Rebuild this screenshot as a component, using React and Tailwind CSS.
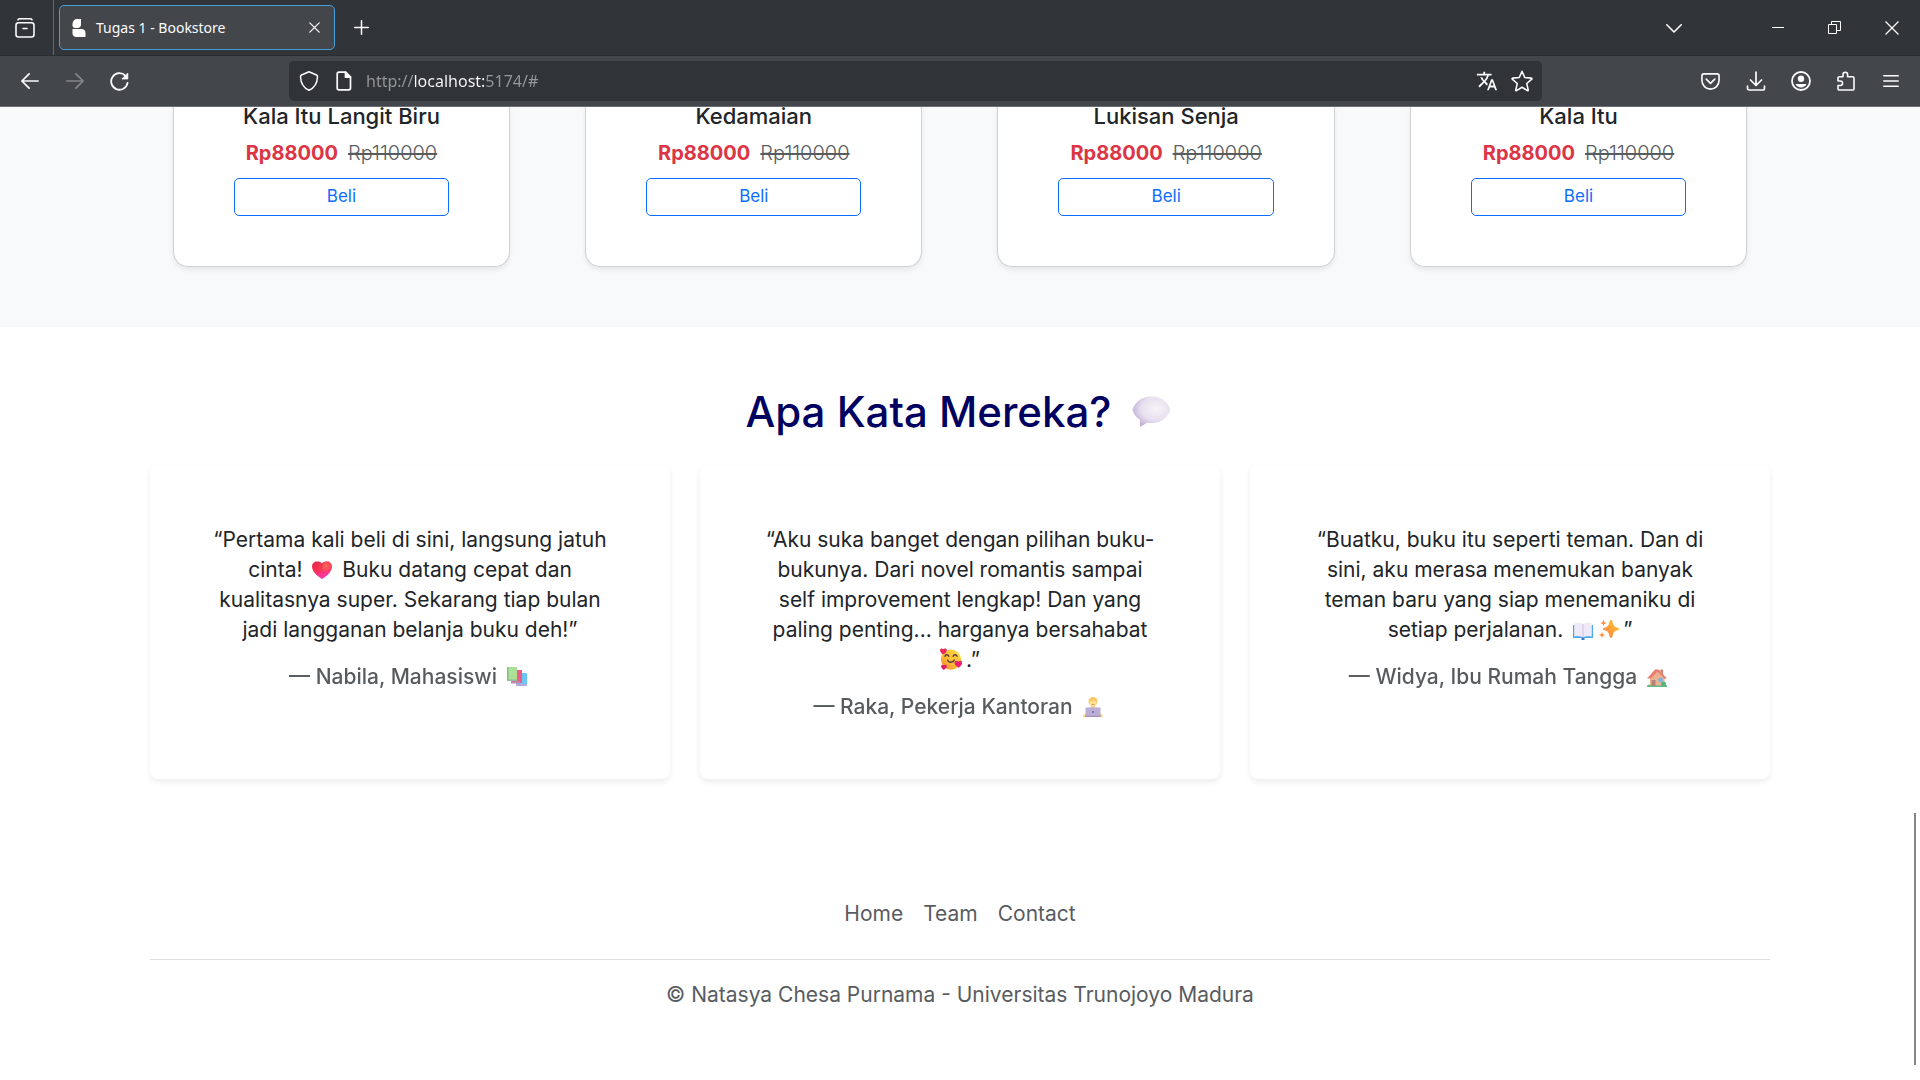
import { MdTranslate } from "react-icons/md";

const books = ["Kala Itu Langit Biru", "Kedamaian", "Lukisan Senja", "Kala Itu"];

function Emoji({ label, className = "mx-1 h-5 w-5", children }) {
  return (
    <svg role="img" aria-label={label} viewBox="0 0 20 20" className={`inline-block align-[-3px] ${className}`}>
      {children}
    </svg>
  );
}

function Heart() {
  return (
    <Emoji label="hati">
      <defs>
        <linearGradient id="heart" x1="0" y1="0" x2="0.3" y2="1">
          <stop offset="0" stopColor="#e0264f" />
          <stop offset="0.5" stopColor="#f9304f" />
          <stop offset="1" stopColor="#f837b0" />
        </linearGradient>
        <radialGradient id="heartGlow" cx="0.7" cy="0.25" r="0.4">
          <stop offset="0" stopColor="#ff6a5c" />
          <stop offset="1" stopColor="#ff6a5c" stopOpacity="0" />
        </radialGradient>
      </defs>
      <path d="M10 19C6 16.500 0 12 0 6.500 0 3.500 2.300 1.500 5 1.500c2.200 0 4 .6 5 2 1-1.400 2.800-2 5-2 2.700 0 5 2 5 5C20 12 14 16.500 10 19Z" fill="url(#heart)" />
      <path d="M10 19C6 16.500 0 12 0 6.500 0 3.500 2.300 1.500 5 1.500c2.200 0 4 .6 5 2 1-1.400 2.800-2 5-2 2.700 0 5 2 5 5C20 12 14 16.500 10 19Z" fill="url(#heartGlow)" />
      <path d="M10 3.500c0 2-.3 3.500-1.300 5" stroke="#d02a50" strokeWidth=".9" fill="none" />
    </Emoji>
  );
}

function Books() {
  return (
    <Emoji label="buku" className="ml-[10px] mr-1 h-5 w-5">
      <rect x="9" y="6" width="11" height="12" fill="#38b6f5" />
      <rect x="9" y="17" width="11" height="2" fill="#9c8fd0" />
      <rect x="4" y="3" width="11" height="13" fill="#e8285e" />
      <rect x="4" y="14.500" width="9" height="2" fill="#a86aa0" />
      <rect x="0" y="0" width="10" height="14" fill="#8fd673" />
      <rect x="0" y="0" width="1.500" height="14" fill="#5fa862" />
      <rect x="0" y="12.500" width="10" height="1.500" fill="#68a778" />
    </Emoji>
  );
}

function Smile() {
  return (
    <Emoji label="wajah tersenyum dengan hati" className="mr-1 h-[22px] w-[22px]">
      <defs>
        <linearGradient id="face" x1="1" y1="0" x2="0" y2="1">
          <stop offset="0" stopColor="#ffe04a" />
          <stop offset="0.6" stopColor="#fdb832" />
          <stop offset="1" stopColor="#f2763a" />
        </linearGradient>
      </defs>
      <circle cx="10" cy="10.500" r="9.200" fill="url(#face)" />
      <path d="M4.500 7.500c.6-1.800 2.800-1.800 3.500 0M12 7.500c.6-1.800 2.800-1.800 3.500 0M7 11c.8 2.600 5 2.600 6 0" fill="none" stroke="#553b3c" strokeWidth="1.300" strokeLinecap="round" />
      <path d="M3 6C1.500 5 0 3.800 0 2 0 .2 2.200-.2 3 1.200 3.800-.2 6.500.2 6.200 2 6 3.800 4.500 5 3 6Z" fill="#e8285e" />
      <path d="M3.500 20C2 19 1 18 1 16.700c0-1.500 1.900-2 2.600-.8.800-1.200 2.700-.7 2.600.8 0 1.300-1.200 2.300-2.700 3.300Z" fill="#e01a62" />
      <path d="M16.700 18c-2-1.400-3.700-2.900-3.500-4.800.2-2 2.700-2.200 3.600-.7.900-1.600 3.500-1.200 3.400.7-.1 1.900-1.700 3.500-3.500 4.800Z" fill="#ef2072" />
    </Emoji>
  );
}

function Worker() {
  return (
    <Emoji label="pekerja kantoran" className="ml-[10px] mr-1 h-5 w-5">
      <path d="M0 20c0-1.800.8-3 2.500-3.500h15C19.200 17 20 18.200 20 20Z" fill="#ffcb53" />
      <path d="M3.500 14c.4-2.500 2-4 4-4.200h5c2 .2 3.600 1.700 4 4.200Z" fill="#d9e5f5" />
      <path d="M8 7h4v3c0 1.500-4 1.500-4 0Z" fill="#f5b13f" />
      <circle cx="10" cy="4.500" r="4.500" fill="#f3b52f" />
      <path d="M6.300 4.500c2 0 3.800-.8 4.500-1.700.6.900 1.600 1.500 2.900 1.700 0 3.200-1.500 5.200-3.700 5.200s-3.700-2-3.700-5.200Z" fill="#ffd46b" />
      <path d="M8.500 7.500h3" stroke="#b05b34" strokeWidth=".7" />
      <rect x="2.500" y="10.500" width="15" height="9" rx=".8" fill="#a692ca" />
      <rect x="2" y="18.700" width="16" height="1.300" fill="#8371aa" />
      <rect x="9" y="14" width="2" height="2" fill="#5d4a80" />
    </Emoji>
  );
}

function OpenBook() {
  return (
    <Emoji label="buku terbuka" className="ml-1 mr-[6px] h-5 w-5">
      <path d="M0 5h20v13H0Z" fill="#4aa8ee" />
      <path d="M8.500 17.500h3V20h-3Z" fill="#3181ca" />
      <path d="M1.200 3.200C4 2.500 7.500 2.500 10 4c2.500-1.500 6-1.500 8.800-.8v13.300c-3-.6-6.300-.5-8.800.8-2.500-1.300-5.800-1.400-8.800-.8Z" fill="#efe9f8" />
      <path d="M10 4v13.300" stroke="#c4b9dc" strokeWidth=".8" />
    </Emoji>
  );
}

function Sparkles() {
  return (
    <Emoji label="kilau" className="mr-1 h-5 w-5">
      <defs>
        <linearGradient id="spark" x1="1" y1="0" x2="0" y2="1">
          <stop offset="0" stopColor="#ffc92e" />
          <stop offset="1" stopColor="#ff7a45" />
        </linearGradient>
      </defs>
      <path d="M12 0c.9 0 1.200.5 1.900 3.200.7 2.700 1.400 3.400 3.900 4.200 1.800.5 2.200.9 2.200 1.600s-.4 1.100-2.200 1.600c-2.500.8-3.200 1.500-3.900 4.200-.7 2.700-1 3.200-1.900 3.200s-1.200-.5-1.900-3.200c-.7-2.700-1.400-3.400-3.900-4.200C4.400 10.100 4 9.700 4 9s.4-1.100 2.200-1.600c2.500-.8 3.200-1.500 3.900-4.200C10.800.5 11.100 0 12 0Z" fill="url(#spark)" />
      <path d="m4.500 0 .9 2.100L7.500 3l-2.100.9L4.500 6l-.9-2.100L1.500 3l2.100-.9ZM3 12l.9 2.100L6 15l-2.100.9L3 18l-.9-2.100L0 15l2.100-.9Z" fill="#ff9140" />
    </Emoji>
  );
}

function House() {
  return (
    <Emoji label="rumah" className="ml-[10px] mr-1 h-5 w-5">
      <path d="M0 20v-1.500C3 16 17 16 20 18.500V20Z" fill="#25a95c" />
      <rect x="13.500" y="2.500" width="2.500" height="5" fill="#c05745" />
      <path d="M3 10 8 4l5-1 4.500 7v8.500H3Z" fill="#e5996c" />
      <path d="M0 11.500 8 2.500h3.500l8 8.500-1.500 1.200-7.500-7.700-6.500 7Z" fill="#e45444" />
      <path d="M4.500 19v-6h4V19Z" fill="#9b5b4d" />
      <rect x="11.500" y="11" width="4" height="4" fill="#3ba3e8" />
      <circle cx="16.500" cy="17" r="2.500" fill="#1f9a56" />
    </Emoji>
  );
}

function SpeechBubble() {
  return (
    <svg role="img" aria-label="balon percakapan" viewBox="0 0 39 31" className="ml-5 mr-1 h-[31px] w-[39px]">
      <defs>
        <radialGradient id="bubble" cx="0.62" cy="0.4" r="0.65">
          <stop offset="0" stopColor="#f6f3f8" />
          <stop offset="0.6" stopColor="#e8e0ef" />
          <stop offset="1" stopColor="#c3b2d6" />
        </radialGradient>
      </defs>
      <path d="M19.500.5C30 .5 36 6.500 38.500 13.500 36 21 30 27 19.500 27c-1.500 0-3-.1-4.400-.3L9.500 30.300c-1 .6-1.800.2-1.700-1l.3-5.300C4 21.500 1.300 17.500.5 13.500 3 6.500 9 .5 19.500.5Z" fill="url(#bubble)" />
    </svg>
  );
}

const testimonials = [
  {
    quote: (
      <>
        “Pertama kali beli di sini, langsung jatuh
        <br />
        cinta! <Heart /> Buku datang cepat dan
        <br />
        kualitasnya super. Sekarang tiap bulan
        <br />
        jadi langganan belanja buku deh!”
      </>
    ),
    author: "Nabila, Mahasiswi",
    icon: <Books />,
  },
  {
    quote: (
      <>
        “Aku suka banget dengan pilihan buku-
        <br />
        bukunya. Dari novel romantis sampai
        <br />
        self improvement lengkap! Dan yang
        <br />
        paling penting... harganya bersahabat
        <br />
        <Smile />.”
      </>
    ),
    author: "Raka, Pekerja Kantoran",
    icon: <Worker />,
  },
  {
    quote: (
      <>
        “Buatku, buku itu seperti teman. Dan di
        <br />
        sini, aku merasa menemukan banyak
        <br />
        teman baru yang siap menemaniku di
        <br />
        setiap perjalanan. <OpenBook />
        <Sparkles />”
      </>
    ),
    author: "Widya, Ibu Rumah Tangga",
    icon: <House />,
  },
];

function Glyph({ children, className = "h-5 w-5", width = 1.5 }) {
  return (
    <svg viewBox="0 0 20 20" className={className} fill="none" stroke="currentColor" strokeWidth={width} strokeLinecap="round" strokeLinejoin="round" aria-hidden="true">
      {children}
    </svg>
  );
}

function ToolButton({ label, children, className = "" }) {
  return (
    <button type="button" aria-label={label} className={`flex h-10 w-[45px] items-center justify-center ${className}`}>
      {children}
    </button>
  );
}

function WindowButton({ label, children }) {
  return (
    <button type="button" aria-label={label} className="flex h-[54px] w-[57px] items-center justify-center">
      {children}
    </button>
  );
}

function TabStrip() {
  return (
    <div className="flex h-14 items-center border-b border-[#2a2d31] bg-[#313539] text-[#fbfbfe]">
      <div className="flex h-full w-[54px] items-center justify-center border-r border-[#63666a]">
        <button type="button" aria-label="Firefox View" className="pr-1">
          <Glyph className="h-5 w-5" width={1.600}>
            <path d="M3 1.800C3.300 1.100 4 .8 5 .8h10c1 0 1.700.3 2 1" />
            <rect x="1" y="4.800" width="18" height="14.200" rx="2.500" />
            <path d="M8 10.500h4" />
          </Glyph>
        </button>
      </div>
      <div className="ml-[5px] flex h-[45px] w-[276px] items-center rounded-[5px] border border-[#45a1dd] bg-[#43474b] pl-3 pr-2">
        <svg viewBox="0 0 14 18" className="h-[18px] w-[14px]" fill="#fff" aria-hidden="true">
          <path d="M5 0h4v5.500C9 7.500 7.500 9 5.500 9H3C1.500 9 .5 8 .5 6.500V5C.5 2 2.500 0 5 0Z" />
          <path d="M.5 10h9c2.300 0 4 1.500 4 4v4H4.500c-2.500 0-4-1.500-4-4Z" />
        </svg>
        <span className="ml-[10px] flex-1 font-['Noto_Sans',sans-serif] text-[14px]">Tugas 1 - Bookstore</span>
        <button type="button" aria-label="Tutup tab" className="flex h-6 w-6 items-center justify-center">
          <Glyph className="h-[11px] w-[11px]" width={2.200}>
            <path d="m1.500 1.500 17 17M18.500 1.500l-17 17" />
          </Glyph>
        </button>
      </div>
      <button type="button" aria-label="Tab baru" className="ml-3 flex h-7 w-7 items-center justify-center">
        <Glyph className="h-[15px] w-[15px]" width={2}>
          <path d="M10 1v18M1 10h18" />
        </Glyph>
      </button>
      <div className="flex-1" />
      <button type="button" aria-label="Daftar semua tab" className="mr-[55px] flex h-10 w-10 items-center justify-center">
        <Glyph className="h-4 w-4" width={2}>
          <path d="m1 6 9 9 9-9" />
        </Glyph>
      </button>
      <WindowButton label="Minimalkan">
        <span className="h-px w-3 bg-white" />
      </WindowButton>
      <WindowButton label="Pulihkan">
        <svg viewBox="0 0 13 13" className="h-[13px] w-[13px]" fill="none" stroke="#fff" aria-hidden="true">
          <path d="M.5 3.500h8v9h-8Z" />
          <path d="M3.500 3.500v-3h9v9h-4" />
        </svg>
      </WindowButton>
      <WindowButton label="Tutup">
        <svg viewBox="0 0 14 14" className="h-[14px] w-[14px]" fill="none" stroke="#fff" strokeWidth="1.200" aria-hidden="true">
          <path d="m.5.5 13 13M13.500.5l-13 13" />
        </svg>
      </WindowButton>
    </div>
  );
}

function Toolbar() {
  return (
    <div className="flex h-[51px] items-center border-b border-[#6b6e72] bg-[#43474b] px-[7px] text-[#fbfbfe]">
      <ToolButton label="Kembali">
        <Glyph className="h-[18px] w-[18px]" width={1.900}>
          <path d="M19 10H1M9 2 1 10l8 8" />
        </Glyph>
      </ToolButton>
      <ToolButton label="Maju" className="text-[#85878a]">
        <Glyph className="h-[18px] w-[18px]" width={1.900}>
          <path d="M1 10h18M11 2l8 8-8 8" />
        </Glyph>
      </ToolButton>
      <ToolButton label="Muat ulang">
        <Glyph className="h-[19px] w-[19px]" width={1.900}>
          <path d="M18.500 11.500A8.700 8.700 0 1 1 16.300 4" />
          <path d="M18.700 1.500v5.800h-5.800Z" fill="currentColor" strokeWidth="1" />
        </Glyph>
      </ToolButton>
      <div className="ml-[147px] mr-[146px] flex h-10 flex-1 items-center rounded-[5px] bg-[#303438] pl-[10px] pr-[9px]">
        <Glyph className="h-5 w-5">
          <path d="M10 .8 17.500 4c.8.4 1 .9 1 1.800-.2 6-2.800 11-8.500 13.500C4.300 16.800 1.700 11.800 1.500 5.800c0-.9.200-1.400 1-1.800Z" />
        </Glyph>
        <Glyph className="ml-[15px] h-5 w-5" width={1.700}>
          <path d="M5 1.200h6.500l5 5V17a1.800 1.800 0 0 1-1.800 1.800H5A1.800 1.800 0 0 1 3.200 17V3A1.800 1.800 0 0 1 5 1.200Z" />
          <path d="M11.500 1.200v5h5Z" fill="currentColor" />
        </Glyph>
        <input
          aria-label="Alamat"
          defaultValue="http://localhost:5174/#"
          className="ml-3 h-8 min-w-0 flex-1 bg-[linear-gradient(90deg,#96989a_49px,#fbfbfe_49px,#fbfbfe_119px,#96989a_119px)] bg-clip-text font-['Noto_Sans',sans-serif] text-[16px] text-transparent outline-none"
        />
        <button type="button" aria-label="Terjemahkan halaman" className="mr-[13px]">
          <MdTranslate className="h-[22px] w-[22px]" />
        </button>
        <button type="button" aria-label="Tandai halaman">
          <Glyph className="h-[22px] w-[22px]" width={1.400}>
            <path d="m10 1.200 2.500 5.600 6.100.6c.5.100.6.500.3.900l-4.600 4 1.400 6c.1.500-.3.800-.7.500L10 15.700l-5 3.100c-.4.300-.8 0-.7-.5l1.400-6-4.600-4c-.3-.4-.2-.8.300-.9l6.100-.6Z" />
          </Glyph>
        </button>
      </div>
      <ToolButton label="Simpan ke Pocket">
        <Glyph className="h-[19px] w-[19px]" width={1.700}>
          <path d="M3 2h14a2 2 0 0 1 2 2v5a9 9 0 0 1-18 0V4a2 2 0 0 1 2-2Z" />
          <path d="m5.500 7.500 4.500 4.500 4.500-4.500" />
        </Glyph>
      </ToolButton>
      <ToolButton label="Unduhan">
        <Glyph className="h-5 w-5" width={1.700}>
          <path d="M10 1v13M4.500 9l5.500 5.500L15.500 9M1.500 15v2.300A1.700 1.700 0 0 0 3.200 19h13.600a1.700 1.700 0 0 0 1.700-1.700V15" />
        </Glyph>
      </ToolButton>
      <ToolButton label="Akun">
        <Glyph className="h-5 w-5" width={1.800}>
          <circle cx="10" cy="10" r="9" />
          <circle cx="10" cy="7.800" r="3.200" fill="currentColor" stroke="none" />
          <path d="M4.500 13h11c-.9 2.300-3 3.500-5.500 3.500S5.400 15.300 4.500 13Z" fill="currentColor" stroke="none" />
        </Glyph>
      </ToolButton>
      <ToolButton label="Ekstensi">
        <Glyph className="h-5 w-5" width={1.600}>
          <path d="M2 7.500V7c0-.8.600-1.300 1.300-1.300H7V3.500a2.300 2.300 0 0 1 4.600 0v2.200h5c.8 0 1.400.6 1.400 1.400V18c0 .6-.5 1-1 1H3.300A1.200 1.200 0 0 1 2 17.800v-3.300h2.300a2.200 2.200 0 0 0 0-4.500H2Z" />
        </Glyph>
      </ToolButton>
      <ToolButton label="Menu">
        <Glyph className="h-4 w-4" width={1.900}>
          <path d="M1 3.500h18M1 10h18M1 16.500h18" />
        </Glyph>
      </ToolButton>
    </div>
  );
}

export default function App() {
  return (
    <div className="relative min-h-screen bg-white font-[Inter,sans-serif] text-[#212529]">
      <header>
        <TabStrip />
        <Toolbar />
      </header>

      <main>
        <section className="bg-[#f8f9fb] pb-[60px]">
          <div className="mx-auto grid w-[82%] grid-cols-4 gap-[75px]">
            {books.map((title) => (
              <article key={title} className="flex flex-col rounded-b-[15px] border border-t-0 border-[#d0d2d4] bg-white px-[60px] pb-[50px] text-center shadow-[0_3px_5px_rgba(0,0,0,0.07)]">
                <h3 className="whitespace-nowrap text-[22px] font-medium leading-[18px]">{title}</h3>
                <p className="mt-[13px] flex justify-center gap-[10px] whitespace-nowrap text-[20px] leading-[30px]">
                  <strong className="font-bold text-[#dc3545]">Rp88000</strong>
                  <s className="font-light text-[#595c5f]">Rp110000</s>
                </p>
                <button type="button" className="mt-[10px] h-[38px] w-full rounded-[5px] border border-[#0d6efd] text-[17px] text-[#0d6efd]">
                  Beli
                </button>
              </article>
            ))}
          </div>
        </section>

        <section className="mx-auto w-[84.375%] pt-[60px]">
          <h2 className="flex h-12 items-center justify-center text-[42px] font-medium text-[#000060]">
            Apa Kata Mereka?
            <SpeechBubble />
          </h2>
          <div className="mt-[30px] grid grid-cols-3 gap-[30px]">
            {testimonials.map(({ quote, author, icon }) => (
              <figure key={author} className="rounded-lg bg-white py-[60px] text-center shadow-[0_3px_6px_rgba(0,0,0,0.075)]">
                <blockquote className="whitespace-nowrap text-[21px] leading-[30px]">{quote}</blockquote>
                <figcaption className="mt-5 whitespace-nowrap text-[21px] font-medium leading-6 opacity-75">
                  — {author}
                  {icon}
                </figcaption>
              </figure>
            ))}
          </div>
        </section>
      </main>

      <footer className="mx-auto mt-[120px] w-[84.375%] text-[21px] leading-[30px] text-[#595c5f]">
        <nav className="flex justify-center gap-5 border-b border-[#dee0e2] pb-[30px]">
          <a href="#home">Home</a>
          <a href="#team">Team</a>
          <a href="#contact">Contact</a>
        </nav>
        <p className="mt-5 text-center">© Natasya Chesa Purnama - Universitas Trunojoyo Madura</p>
      </footer>

      <div className="absolute right-1 top-[813px] h-[252px] w-[2px] bg-[#858585]" />
    </div>
  );
}
